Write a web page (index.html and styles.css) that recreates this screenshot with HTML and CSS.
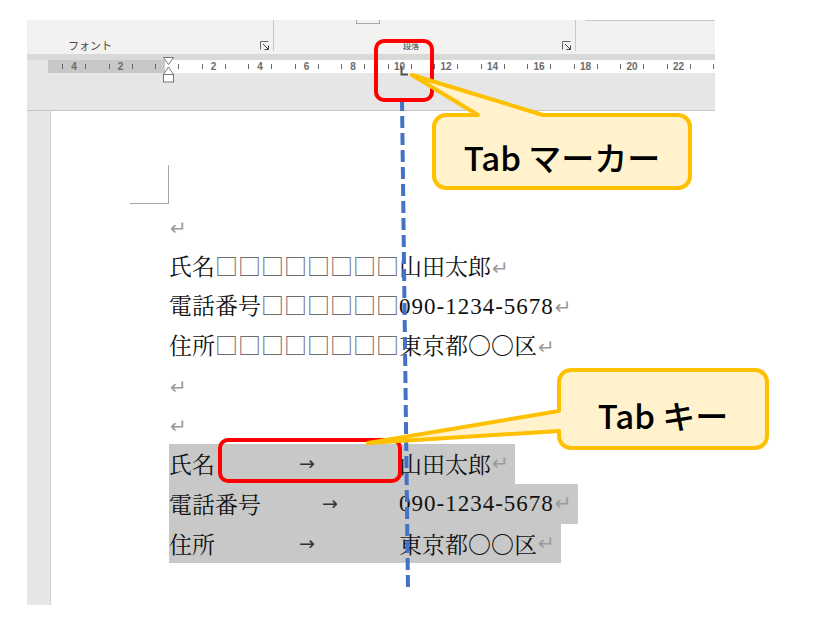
FILE: index.html
```html
<!DOCTYPE html>
<html lang="ja">
<head>
    <meta charset="UTF-8">
    <title>Tab マーカー</title>
    <link rel="stylesheet" href="styles.css">
</head>
<body>
    <div class="word">
        <div class="ribbon">
            <div class="group group-font">
                <div class="group-top"></div>
                <div class="group-bottom">
                    <span class="group-label">フォント</span>
                    <svg class="launcher" width="10" height="9" viewBox="0 0 10 9">
                        <path d="M0.5 8.5V0.5H8.5" fill="none" stroke="#666"/>
                        <path d="M3 3L8.5 8.5M8.5 4.5V8.5H4.5" fill="none" stroke="#444"/>
                    </svg>
                </div>
            </div>
            <div class="group group-para">
                <div class="group-top"><span class="btn-edge"></span></div>
                <div class="group-bottom">
                    <span class="group-label small">段落</span>
                    <svg class="launcher" width="10" height="9" viewBox="0 0 10 9">
                        <path d="M0.5 8.5V0.5H8.5" fill="none" stroke="#666"/>
                        <path d="M3 3L8.5 8.5M8.5 4.5V8.5H4.5" fill="none" stroke="#444"/>
                    </svg>
                </div>
            </div>
            <div class="group-rest"></div>
        </div>

        <div class="ruler-area">
            <div class="ruler">
                <svg width="667" height="13" viewBox="0 0 667 13">
                    <rect x="0" y="0" width="117" height="13" fill="#c8c8c8"/>
                    <g fill="#666">
                        <rect x="14" y="4" width="1" height="5"/>
                        <rect x="37" y="4" width="1" height="5"/>
                        <rect x="61" y="4" width="1" height="5"/>
                        <rect x="84" y="4" width="1" height="5"/>
                        <rect x="107" y="4" width="1" height="5"/>
                        <rect x="130" y="4" width="1" height="5"/>
                        <rect x="154" y="4" width="1" height="5"/>
                        <rect x="177" y="4" width="1" height="5"/>
                        <rect x="200" y="4" width="1" height="5"/>
                        <rect x="223" y="4" width="1" height="5"/>
                        <rect x="247" y="4" width="1" height="5"/>
                        <rect x="270" y="4" width="1" height="5"/>
                        <rect x="293" y="4" width="1" height="5"/>
                        <rect x="316" y="4" width="1" height="5"/>
                        <rect x="340" y="4" width="1" height="5"/>
                        <rect x="363" y="4" width="1" height="5"/>
                        <rect x="386" y="4" width="1" height="5"/>
                        <rect x="409" y="4" width="1" height="5"/>
                        <rect x="433" y="4" width="1" height="5"/>
                        <rect x="456" y="4" width="1" height="5"/>
                        <rect x="479" y="4" width="1" height="5"/>
                        <rect x="502" y="4" width="1" height="5"/>
                        <rect x="526" y="4" width="1" height="5"/>
                        <rect x="549" y="4" width="1" height="5"/>
                        <rect x="572" y="4" width="1" height="5"/>
                        <rect x="595" y="4" width="1" height="5"/>
                        <rect x="619" y="4" width="1" height="5"/>
                        <rect x="642" y="4" width="1" height="5"/>
                        <rect x="665" y="4" width="1" height="5"/>
                    </g>
                    <g class="ruler-num" text-anchor="middle">
                        <text x="26" y="10">4</text>
                        <text x="72.5" y="10">2</text>
                        <text x="165.5" y="10">2</text>
                        <text x="212" y="10">4</text>
                        <text x="258.5" y="10">6</text>
                        <text x="305" y="10">8</text>
                        <text x="351.5" y="10">10</text>
                        <text x="398" y="10">12</text>
                        <text x="444.5" y="10">14</text>
                        <text x="491" y="10">16</text>
                        <text x="537.5" y="10">18</text>
                        <text x="584" y="10">20</text>
                        <text x="630.5" y="10">22</text>
                    </g>
                </svg>
            </div>
            <svg class="indent-marker" width="11" height="26" viewBox="0 0 11 26">
                <path d="M0.5 0.5H10.5L5.5 7.5Z" fill="#fff" stroke="#777"/>
                <path d="M5.5 10L10.5 17.5H0.5Z" fill="#fff" stroke="#777"/>
                <rect x="0.5" y="17.5" width="10" height="7.5" fill="#fff" stroke="#777"/>
            </svg>
            <svg class="tab-marker" width="8" height="10" viewBox="0 0 8 10">
                <path d="M1.5 0V8.5H8" fill="none" stroke="#555" stroke-width="2"/>
            </svg>
        </div>

        <div class="workspace">
            <div class="gutter"></div>
            <div class="page">
                <div class="crop"></div>
                <div class="doc">
                    <div class="line"><span class="ret">↵</span></div>
                    <div class="line">氏名<span class="sp">□□□□□□□□</span>山田太郎<span class="ret">↵</span></div>
                    <div class="line">電話番号<span class="sp">□□□□□□</span><span class="num">090-1234-5678</span><span class="ret">↵</span></div>
                    <div class="line">住所<span class="sp">□□□□□□□□</span>東京都〇〇区<span class="ret">↵</span></div>
                    <div class="line"><span class="ret">↵</span></div>
                    <div class="line"><span class="ret">↵</span></div>
                    <div class="line sel"><span class="field">氏名<span class="tab">→</span></span>山田太郎<span class="ret">↵</span></div>
                    <div class="line sel"><span class="field">電話番号<span class="tab">→</span></span><span class="num">090-1234-5678</span><span class="ret">↵</span></div>
                    <div class="line sel"><span class="field">住所<span class="tab">→</span></span>東京都〇〇区<span class="ret">↵</span></div>
                </div>
            </div>
        </div>
    </div>

    <!-- annotations drawn over the screenshot -->
    <svg class="overlay" width="815" height="619" viewBox="0 0 815 619">
        <line x1="402" y1="99" x2="408" y2="590" stroke="#4472c4" stroke-width="4" stroke-dasharray="12 5"/>
        <rect x="376" y="41" width="56" height="59" rx="8" fill="none" stroke="#ff0000" stroke-width="4"/>
        <rect x="220" y="440" width="180" height="41" rx="8" fill="none" stroke="#ff0000" stroke-width="4"/>
        <path d="M446 115H478L412 75L543 115H678A12 12 0 0 1 690 127V176A12 12 0 0 1 678 188H446A12 12 0 0 1 434 176V127A12 12 0 0 1 446 115Z"
              fill="#fff2cc" stroke="#ffc000" stroke-width="4" stroke-linejoin="round"/>
        <path d="M571 370H755A12 12 0 0 1 767 382V436A12 12 0 0 1 755 448H571A12 12 0 0 1 559 436V431L368 443L559 411V382A12 12 0 0 1 571 370Z"
              fill="#fff2cc" stroke="#ffc000" stroke-width="4" stroke-linejoin="round"/>
    </svg>
    <div class="callout-text callout-marker">Tab マーカー</div>
    <div class="callout-text callout-key">Tab キー</div>
</body>
</html>
```

FILE: styles.css
```css
body {
    margin: 0;
    width: 815px;
    height: 619px;
    position: relative;
    overflow: hidden;
    background-color: #ffffff;
    font-family: "Noto Sans CJK JP", sans-serif;
}
.word {
    margin: 20px 0 0 27px;
    width: 688px;
}

/* ribbon */
.ribbon {
    height: 34px;
    display: flex;
    align-items: flex-start;
    background-color: #f3f2f1;
}
.group {
    height: 31px;
    display: flex;
    flex-direction: column;
    justify-content: space-between;
    border-right: 1px solid #c8c8c8;
    box-sizing: border-box;
}
.group-font {
    width: 247px;
    padding-left: 41px;
}
.group-para {
    width: 302px;
    padding-left: 129px;
}
.group-top {
    height: 4px;
}
.btn-edge {
    display: block;
    width: 22px;
    height: 3px;
    margin-left: -47px;
    border: 1px solid #a8a8a8;
    border-top: none;
}
.group-bottom {
    display: flex;
    align-items: center;
    padding-right: 3px;
}
.group-label {
    font-size: 11px;
    line-height: 12px;
    color: #444;
}
.group-label.small {
    font-size: 8px;
    line-height: 10px;
    margin-top: 2px;
}
.launcher {
    margin-left: auto;
    display: block;
}
.group-rest {
    flex: 1;
    margin-left: 9px;
    border-top: 1px solid #c8c8c8;
}

/* ruler */
.ruler-area {
    position: relative;
    height: 57px;
    padding-top: 6px;
    box-sizing: border-box;
    background: linear-gradient(#d9d9d9 6px, #e6e6e6 6px);
    border-bottom: 1px solid #c6c6c6;
}
.ruler {
    margin-left: 21px;
    height: 13px;
    background-color: #ffffff;
}
.ruler svg {
    display: block;
}
.ruler-num {
    font-family: "Liberation Sans", sans-serif;
    font-size: 10px;
    font-weight: bold;
    fill: #6a6a6a;
}
.indent-marker {
    position: absolute;
    left: 136px;
    top: 3px;
}
.tab-marker {
    position: absolute;
    left: 373px;
    top: 12px;
}

/* document */
.workspace {
    display: flex;
    height: 494px;
}
.gutter {
    width: 23px;
    background-color: #e6e6e6;
    border-right: 1px solid #d2d2d2;
}
.page {
    flex: 1;
    padding-top: 54px;
    background-color: #ffffff;
}
.crop {
    margin-left: 79px;
    width: 39px;
    height: 39px;
    box-sizing: border-box;
    border-right: 1px solid #a6a6a6;
    border-bottom: 1px solid #a6a6a6;
}
.doc {
    margin: 2px 0 0 118px;
}
.line {
    height: 39.7px;
    line-height: 39.7px;
    font-size: 23px;
    font-family: "Noto Serif CJK JP", "Noto Sans CJK JP", serif;
    color: #111;
    white-space: pre;
}
.line.sel {
    display: flex;
    width: fit-content;
    padding-right: 6px;
    background-color: #c8c8c8;
}
.field {
    display: flex;
    width: 230px;
}
.tab {
    flex: 1;
    text-align: center;
    font-family: "DejaVu Sans", sans-serif;
    font-size: 19px;
    color: #333;
}
.sp {
    color: #6e6e6e;
}
.num {
    font-family: "Liberation Serif", serif;
    letter-spacing: 1px;
}
.ret {
    font-family: "DejaVu Sans", sans-serif;
    font-size: 20px;
    color: #9a9a9a;
    margin-left: 1px;
}

/* annotations */
.overlay {
    position: absolute;
    top: 0;
    left: 0;
}
.callout-text {
    position: absolute;
    display: flex;
    align-items: center;
    justify-content: center;
    font-family: "Noto Sans CJK JP", sans-serif;
    font-size: 33px;
    font-weight: 500;
    color: #000;
}
.callout-marker {
    left: 432px;
    top: 118px;
    width: 260px;
    height: 77px;
}
.callout-key {
    left: 557px;
    top: 374px;
    width: 212px;
    height: 82px;
}
```
